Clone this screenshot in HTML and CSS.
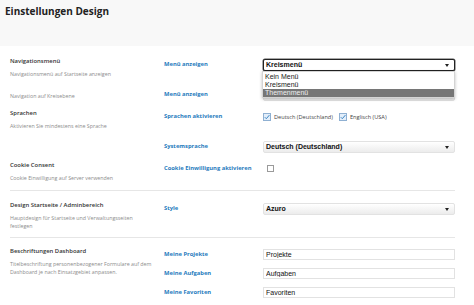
FILE: index.html
```html
<!DOCTYPE html>
<html lang="de">
<head>
    <meta charset="UTF-8">
    <meta name="viewport" content="width=device-width, initial-scale=1.0">
    <title>Einstellungen Design</title>
    <link rel="stylesheet" href="styles.css">
</head>
<body>
    <div class="page-header">
        <h1>Einstellungen Design</h1>
    </div>

    <div class="settings">
        <div class="block">
            <div class="info">
                <h3>Navigationsmenü</h3>
                <p>Navigationsmenü auf Startseite anzeigen</p>
            </div>
            <div class="field-label">Menü anzeigen</div>
            <div class="control">
                <div class="select open">
                    <span>Kreismenü</span><i class="arrow"></i>
                    <ul class="dropdown">
                        <li>Kein Menü</li>
                        <li>Kreismenü</li>
                        <li class="active">Themenmenü</li>
                    </ul>
                </div>
            </div>

            <div class="info">
                <p class="single">Navigation auf Kreisebene</p>
            </div>
            <div class="field-label">Menü anzeigen</div>
            <div class="control">
                <div class="select"><i class="arrow"></i></div>
            </div>

            <div class="info">
                <h3>Sprachen</h3>
                <p>Aktivieren Sie mindestens eine Sprache</p>
            </div>
            <div class="field-label">Sprachen aktivieren</div>
            <div class="control checks">
                <label class="check">
                    <svg class="box" width="8" height="8" viewBox="0 0 8 8"><rect x="0.5" y="0.5" width="7" height="7" fill="#e3eefa" stroke="#8fb0d2"/><path d="M1.8 4.2 L3.3 5.7 L6.4 2.1" fill="none" stroke="#3a86c4" stroke-width="1"/></svg>
                    Deutsch (Deutschland)
                </label>
                <label class="check">
                    <svg class="box" width="8" height="8" viewBox="0 0 8 8"><rect x="0.5" y="0.5" width="7" height="7" fill="#e3eefa" stroke="#8fb0d2"/><path d="M1.8 4.2 L3.3 5.7 L6.4 2.1" fill="none" stroke="#3a86c4" stroke-width="1"/></svg>
                    Englisch (USA)
                </label>
            </div>

            <div class="info"></div>
            <div class="field-label">Systemsprache</div>
            <div class="control">
                <div class="select"><span>Deutsch (Deutschland)</span><i class="arrow"></i></div>
            </div>

            <div class="info">
                <h3>Cookie Consent</h3>
                <p>Cookie Einwilligung auf Server verwenden</p>
            </div>
            <div class="field-label">Cookie Einwilligung aktivieren</div>
            <div class="control">
                <svg class="single-box" width="7" height="7" viewBox="0 0 7 7"><rect x="0.5" y="0.5" width="6" height="6" fill="#fff" stroke="#9a9a9a"/></svg>
            </div>
        </div>

        <div class="block">
            <div class="info">
                <h3>Design Startseite / Adminbereich</h3>
                <p>Hauptdesign für Startseite und Verwaltungsseiten<br>festlegen</p>
            </div>
            <div class="field-label">Style</div>
            <div class="control">
                <div class="select"><span>Azuro</span><i class="arrow"></i></div>
            </div>
        </div>

        <div class="block compact">
            <div class="info span-3">
                <h3>Beschriftungen Dashboard</h3>
                <p>Titelbeschriftung personenbezogener Formulare auf dem Dashboard je nach Einsatzgebiet anpassen.</p>
            </div>
            <div class="field-label">Meine Projekte</div>
            <div class="control"><input type="text" value="Projekte"></div>
            <div class="field-label">Meine Aufgaben</div>
            <div class="control"><input type="text" value="Aufgaben"></div>
            <div class="field-label">Meine Favoriten</div>
            <div class="control"><input type="text" value="Favoriten"></div>
        </div>
    </div>
</body>
</html>
```

FILE: styles.css
```css
* {
    padding: 0;
    margin: 0;
    box-sizing: border-box;
}
body {
    font-family: "Open Sans", "Noto Sans", sans-serif;
    background-color: #fff;
    color: #333;
}
.page-header {
    background-color: #f8f8f8;
    height: 46px;
    padding: 4px 5px;
}
.page-header h1 {
    font-size: 10px;
    line-height: 14px;
    font-weight: 700;
    color: #222;
}
.settings {
    padding: 10px 19px 0 10px;
}
.block {
    display: grid;
    grid-template-columns: 154px 99px 192px;
    row-gap: 7.5px;
    align-items: start;
    padding-bottom: 8px;
}
.block + .block {
    border-top: 1px solid #e6e6e6;
    padding-top: 8.5px;
}
.block + .block:not(.compact) {
    padding-bottom: 7px;
}
.block.compact {
    row-gap: 5px;
}
.info h3 {
    font-size: 5.9px;
    line-height: 10px;
    font-weight: 600;
    color: #333;
}
.info p {
    font-size: 5.3px;
    line-height: 8px;
    margin-top: 4px;
    color: #8c8c8c;
    padding-right: 6px;
}
.info p.single {
    margin-top: 6px;
}
.span-3 {
    grid-row: span 3;
}
.field-label {
    margin-top: 3px;
    font-size: 5.8px;
    line-height: 11px;
    font-weight: 700;
    color: #1f7bbd;
}
.control {
    margin-top: 3px;
    min-height: 11px;
}
.select {
    position: relative;
    height: 12px;
    border: 1px solid #e2e2e2;
    border-radius: 2px;
    background: linear-gradient(#ffffff, #ececec);
    font-family: "Liberation Sans", Arial, sans-serif;
    font-size: 7px;
    font-weight: 700;
    line-height: 10px;
    color: #111;
    padding-left: 2px;
}
.select.open {
    border-color: #222;
    background: #fff;
    box-shadow: 0 0 0 0.5px #555;
}
.arrow {
    position: absolute;
    right: 5px;
    top: 4px;
    border-left: 2.5px solid transparent;
    border-right: 2.5px solid transparent;
    border-top: 3px solid #222;
}
.dropdown {
    position: absolute;
    left: -2px;
    right: -1px;
    top: 11px;
    z-index: 2;
    list-style: none;
    background-color: #fff;
    border: 1px solid #d4d4d4;
    box-shadow: 0 1px 3px rgba(0, 0, 0, 0.25);
    padding: 1px 0 0;
}
.dropdown li {
    font-weight: 400;
    font-size: 7px;
    line-height: 8px;
    padding-left: 2px;
    color: #222;
}
.dropdown li.active {
    background-color: #767676;
    color: #eee;
}
.checks {
    display: flex;
    gap: 6px;
}
.check {
    display: flex;
    align-items: center;
    gap: 3px;
    font-size: 5.6px;
    line-height: 10px;
    color: #444;
}
.single-box {
    display: block;
    margin: 2px 0 0 4px;
}
input[type="text"] {
    display: block;
    width: 100%;
    height: 11px;
    border: 1px solid #e2e2e2;
    background: #fff;
    font-family: "Liberation Sans", Arial, sans-serif;
    font-size: 7px;
    color: #111;
    padding: 0 2px;
    outline: none;
}
```
